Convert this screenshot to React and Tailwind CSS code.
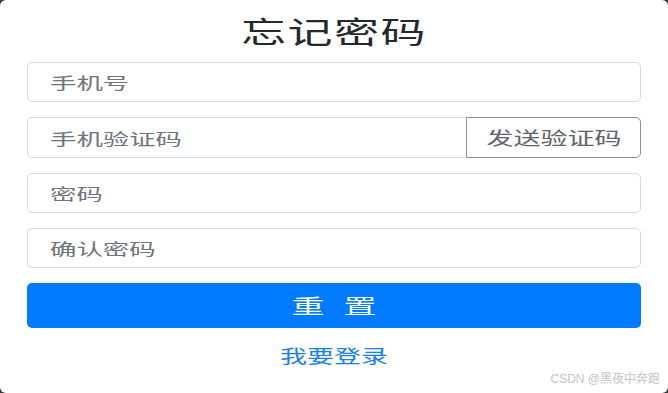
import React from 'react'

const cjk = { fontFamily: '"Noto Sans CJK SC", "Noto Sans", sans-serif' }

function Field({ label, className = '' }) {
  return (
    <div className={`flex h-[40px] items-center rounded-[5px] border border-[#d6dbe0] bg-white pl-[22px] text-[16px] text-[#6f757b] ${className}`}>
      {/* the reference is stretched horizontally, so text is widened to match */}
      <span className="inline-block origin-left scale-x-[1.65]">{label}</span>
    </div>
  )
}

export default function App() {
  return (
    <div className="h-[393px] w-[668px] bg-[#3a3a3a]" style={cjk}>
      <div className="relative flex h-full w-full flex-col rounded-[6px] bg-white px-[27px]">
        <div className="flex h-[62px] items-center justify-center pb-[3px]">
          <span className="inline-block scale-x-[1.5] text-[30px] leading-none tracking-[1px] text-[#24292e]">忘记密码</span>
        </div>

        <div className="flex flex-col gap-[15px]">
          <Field label="手机号" />
          <div className="flex h-[41px]">
            <Field label="手机验证码" className="h-[41px] flex-1 rounded-r-none border-r-0" />
            <button
              type="button"
              className="flex w-[175px] items-center justify-center rounded-r-[5px] border border-[#8a9096] bg-white text-[18px] text-[#5f656b]"
            >
              <span className="inline-block scale-x-[1.5]">发送验证码</span>
            </button>
          </div>
          <Field label="密码" />
          <Field label="确认密码" />
          <button
            type="button"
            className="flex h-[45px] items-center justify-center gap-[32px] rounded-[5px] bg-[#007bff] text-[20px] text-white"
          >
            <span className="inline-block scale-x-[1.65]">重</span>
            <span className="inline-block scale-x-[1.65]">置</span>
          </button>
        </div>

        <div className="flex h-[55px] items-center justify-center">
          <span className="inline-block scale-x-[1.5] text-[18px] text-[#1a7ef5]">我要登录</span>
        </div>

        <span className="absolute bottom-[5px] right-[8px] text-[12px] text-[#c4c4c4]" style={{ fontFamily: '"Liberation Sans", "Noto Sans CJK SC", sans-serif' }}>
          CSDN @黑夜中奔跑
        </span>
      </div>
    </div>
  )
}
